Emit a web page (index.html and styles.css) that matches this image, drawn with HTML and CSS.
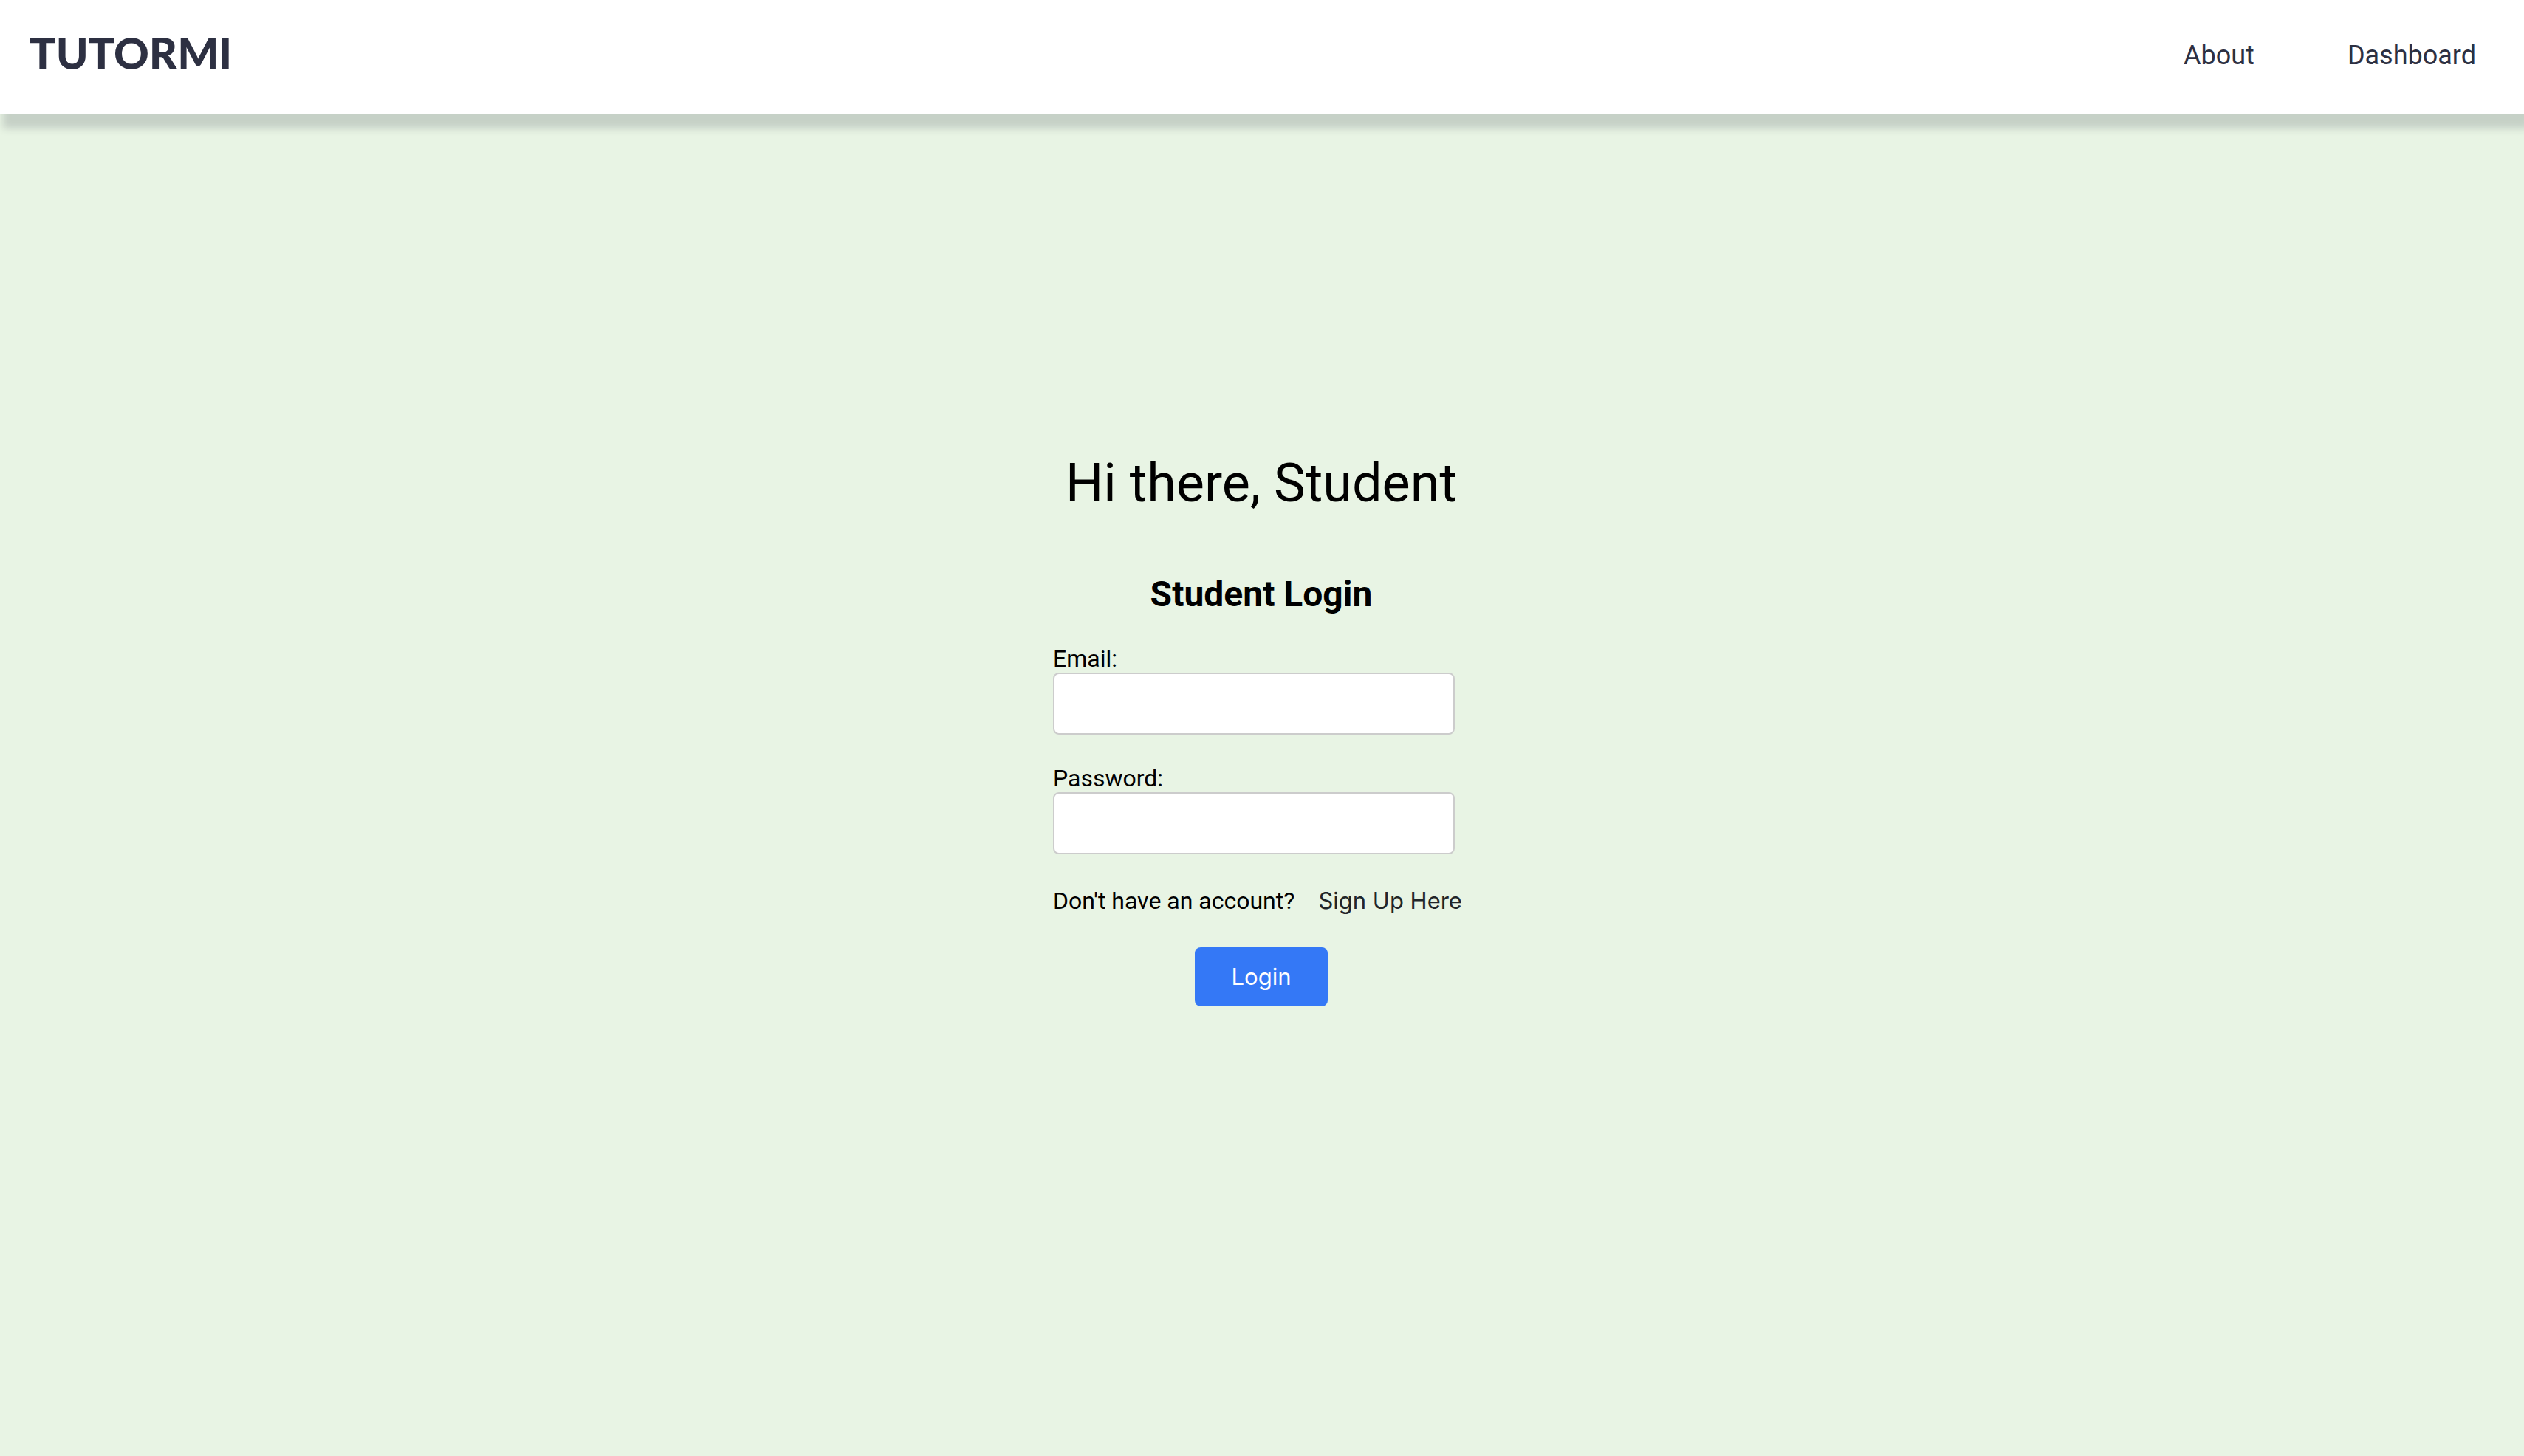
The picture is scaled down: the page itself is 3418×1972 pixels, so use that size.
FILE: index.html
```html
<!DOCTYPE html>
<html lang="en">
<head>
<meta charset="utf-8">
<meta name="viewport" content="width=device-width, initial-scale=1">
<title>Tutormi – Student Login</title>
<link rel="stylesheet" href="styles.css">
</head>
<body>
<header class="navbar">
  <a class="logo" href="#">TUTORMI</a>
  <nav class="nav-links">
    <a class="nav-link" href="#about">About</a>
    <a class="nav-link" href="#dashboard">Dashboard</a>
  </nav>
</header>
<main class="content">
  <h1 class="greeting">Hi there, Student</h1>
  <form class="login">
    <h2 class="login-title">Student Login</h2>
    <div class="field">
      <label class="label" for="email">Email:</label>
      <input class="input" id="email" type="email">
    </div>
    <div class="field">
      <label class="label" for="password">Password:</label>
      <input class="input" id="password" type="password">
    </div>
    <p class="signup">Don't have an account? <a class="signup-link" href="#signup">Sign Up Here</a></p>
    <button class="submit" type="button">Login</button>
  </form>
</main>
</body>
</html>
```
FILE: styles.css
```css
* {
  box-sizing: border-box;
}

body {
  display: flex;
  flex-direction: column;
  min-height: 100vh;
  margin: 0;
  background: #e8f4e4;
  color: #000;
  font: 32px/38px Roboto, sans-serif;
}

.navbar {
  display: flex;
  justify-content: space-between;
  align-items: flex-start;
  padding: 36px 65px 46px 40px;
  background: #fff;
  box-shadow: 6px 18px 10px 2px rgba(45, 48, 66, 0.18);
}

.logo {
  color: #2d3042;
  font: 900 59px/72px Lato, sans-serif;
  text-decoration: none;
}

.nav-links {
  display: flex;
  gap: 126px;
  padding-top: 17px;
}

.nav-link {
  color: #2d3042;
  font-size: 36px;
  line-height: 44px;
  text-decoration: none;
}

.content {
  display: flex;
  flex: 1;
  flex-direction: column;
  justify-content: center;
  align-items: center;
  padding: 0 2px 150px 0;
}

.greeting {
  margin: 0;
  font-size: 72px;
  font-weight: 400;
  line-height: 84px;
}

.login {
  display: flex;
  flex-direction: column;
  width: 564px;
  margin-top: 80px;
}

.login-title {
  margin: 0 0 40px;
  font-size: 48px;
  font-weight: 700;
  line-height: 56px;
  text-align: center;
}

.field {
  display: flex;
  flex-direction: column;
  margin-bottom: 40px;
}

.label {
  line-height: 38px;
}

.input {
  width: 544px;
  height: 84px;
  padding: 0 20px;
  border: 2px solid #ccc;
  border-radius: 8px;
  background: #fff;
  font: inherit;
}

.signup {
  display: flex;
  gap: 32px;
  margin: 4px 0 44px;
  white-space: nowrap;
}

.signup-link {
  color: #212529;
  font-family: Inter, sans-serif;
  font-size: 31px;
  text-decoration: none;
}

.submit {
  align-self: center;
  width: 180px;
  height: 80px;
  padding: 0;
  border: 0;
  border-radius: 8px;
  background: #3478f6;
  color: #fff;
  font: 31px/40px Inter, sans-serif;
}
```
